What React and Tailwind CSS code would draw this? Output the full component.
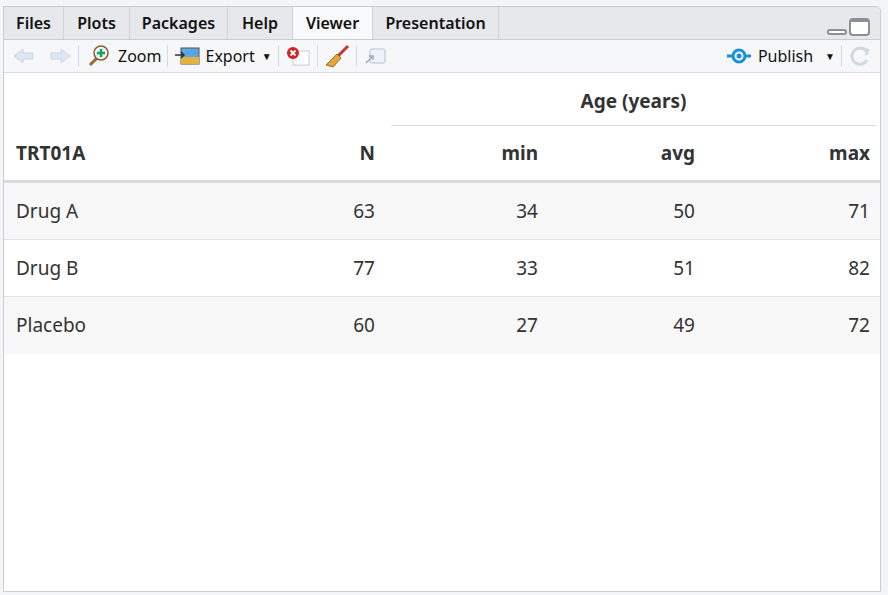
const tabs = ["Files", "Plots", "Packages", "Help", "Viewer", "Presentation"];
const widths = ["w-[60px]", "w-[66px]", "w-[98px]", "w-[65px]", "w-[80px]", "w-[126px]"];
const rows = [
  ["Drug A", 63, 34, 50, 71],
  ["Drug B", 77, 33, 51, 82],
  ["Placebo", 60, 27, 49, 72],
];

function Sep() {
  return <div className="w-px h-[22px] bg-[#d6dbe0] mx-[6px]" />;
}

export default function App() {
  return (
    <div className="w-[888px] h-[595px] bg-[#f4f5f6] pt-[6px] pl-[3px] pr-[7px] pb-[3px] font-['Segoe_UI','Open_Sans',sans-serif] text-[#111]">
      <div className="h-full flex flex-col border border-[#c9cdd2] rounded-tr-[5px] bg-white overflow-hidden">
        <div className="h-[33px] flex bg-[#e6e8eb] border-b border-[#c9cdd2]">
          {tabs.map((t, i) => (
            <div
              key={t}
              className={`${widths[i]} h-full flex items-center justify-center text-[16px] font-semibold border-r border-[#cfd3d8] ${t === "Viewer" ? "bg-[#f7f9fa] h-[34px]" : ""}`}
            >
              {t}
            </div>
          ))}
          <div className="flex-1 flex items-end justify-end gap-[2px] pr-[10px] pb-[3px]">
            <div className="w-[20px] h-[6px] border-2 border-[#8a9096] rounded-sm bg-white mb-[1px]" />
            <div className="w-[21px] h-[18px] border-2 border-[#8a9096] border-t-[4px] rounded-sm bg-white" />
          </div>
        </div>
        <div className="h-[33px] flex items-center bg-[#f5f7f9] border-b border-[#d9dde1] px-[8px] text-[16px]">
          <svg width="24" height="18" viewBox="0 0 24 18"><path d="M2 9 L11 2 V6 H21 V12 H11 V16 Z" fill="#dde8f3" stroke="#c7d7e7" /></svg>
          <svg width="24" height="18" viewBox="0 0 24 18" className="ml-[12px]"><path d="M22 9 L13 2 V6 H3 V12 H13 V16 Z" fill="#dde8f3" stroke="#c7d7e7" /></svg>
          <Sep />
          <svg width="24" height="22" viewBox="0 0 24 22" className="ml-[2px]">
            <line x1="3" y1="20" x2="10" y2="13" stroke="#a0662a" strokeWidth="3" />
            <circle cx="14" cy="8" r="7" fill="#e8f4ff" stroke="#8a5a2a" strokeWidth="1.5" />
            <path d="M14 4 V12 M10 8 H18" stroke="#1aa34a" strokeWidth="2.5" />
          </svg>
          <span className="ml-[7px]">Zoom</span>
          <Sep />
          <svg width="26" height="20" viewBox="0 0 26 20">
            <rect x="7" y="2" width="18" height="16" fill="#5aa7e6" stroke="#555" />
            <rect x="7" y="11" width="18" height="7" fill="#e3b23c" />
            <path d="M1 9 H10 M7 6 L10 9 L7 12" stroke="#333" fill="none" strokeWidth="1.5" />
          </svg>
          <span className="ml-[5px]">Export</span>
          <span className="ml-[7px] text-[10px]">▼</span>
          <Sep />
          <svg width="26" height="20" viewBox="0 0 26 20">
            <rect x="8" y="5" width="16" height="14" fill="#fff" stroke="#ccc" />
            <circle cx="8" cy="7" r="6" fill="#d2202a" />
            <path d="M5.5 4.5 L10.5 9.5 M10.5 4.5 L5.5 9.5" stroke="#fff" strokeWidth="2" />
          </svg>
          <Sep />
          <svg width="26" height="24" viewBox="0 0 26 24">
            <line x1="24" y1="2" x2="14" y2="12" stroke="#c0392b" strokeWidth="3" />
            <path d="M13 10 L17 14 L9 23 L2 21 Z" fill="#e0a83a" stroke="#9a6a1a" />
          </svg>
          <Sep />
          <svg width="24" height="20" viewBox="0 0 24 20">
            <rect x="7" y="3" width="15" height="14" rx="2" fill="#eef3f8" stroke="#b8c4d0" />
            <path d="M3 17 L10 10 M6 10 H10 V14" stroke="#9aa8b6" fill="none" strokeWidth="1.5" />
          </svg>
          <div className="flex-1" />
          <svg width="26" height="20" viewBox="0 0 26 20">
            <circle cx="13" cy="10" r="6" fill="none" stroke="#1a8fd8" strokeWidth="3" />
            <circle cx="13" cy="10" r="2.5" fill="#1a8fd8" />
            <path d="M1 10 H6 M20 10 H25" stroke="#1a8fd8" strokeWidth="3" />
          </svg>
          <span className="ml-[6px]">Publish</span>
          <span className="ml-[12px] text-[10px]">▼</span>
          <Sep />
          <svg width="24" height="22" viewBox="0 0 24 22">
            <path d="M18 6 A8 8 0 1 0 19 15" fill="none" stroke="#cfd8e2" strokeWidth="3" />
            <path d="M14 3 L20 5 L18 10" fill="none" stroke="#cfd8e2" strokeWidth="2.5" />
          </svg>
        </div>
        <div className="font-['Lato','Open_Sans',sans-serif] text-[19px] text-[#333]">
          <div className="flex h-[53px]">
            <div className="w-[387px]" />
            <div className="flex-1 mr-[4px] flex items-center justify-center font-bold border-b border-[#dcdcdc] pt-[4px]">Age (years)</div>
          </div>
          <div className="flex h-[57px] items-center font-bold border-b-[3px] border-[#dcdcdc] pr-[10px]">
            <div className="w-[220px] pl-[12px]">TRT01A</div>
            <div className="w-[151px] text-right">N</div>
            <div className="w-[163px] text-right">min</div>
            <div className="w-[157px] text-right">avg</div>
            <div className="flex-1 text-right">max</div>
          </div>
          {rows.map((r, i) => (
            <div key={r[0]} className={`flex h-[57px] items-center pr-[10px] ${i % 2 === 0 ? "bg-[#f8f8f8]" : ""} ${i < 2 ? "border-b border-[#e3e3e3]" : ""}`}>
              <div className="w-[220px] pl-[12px]">{r[0]}</div>
              <div className="w-[151px] text-right">{r[1]}</div>
              <div className="w-[163px] text-right">{r[2]}</div>
              <div className="w-[157px] text-right">{r[3]}</div>
              <div className="flex-1 text-right">{r[4]}</div>
            </div>
          ))}
        </div>
      </div>
    </div>
  );
}
